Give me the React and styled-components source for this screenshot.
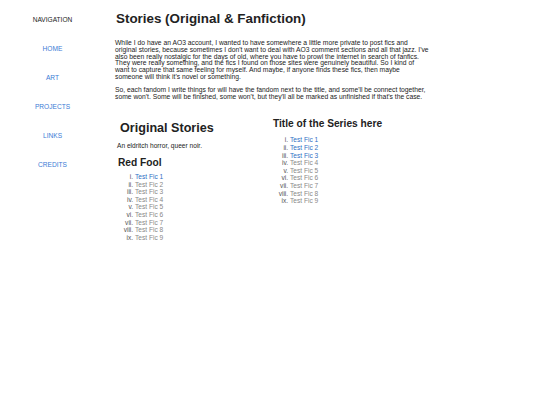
import React from "react";
import styled, { createGlobalStyle } from "styled-components";

const GlobalStyle = createGlobalStyle`
  html, body {
    margin: 0;
    padding: 0;
    background: #fff;
  }
  body {
    font-family: "Liberation Sans", Arial, sans-serif;
    font-size: 6.6px;
    color: #222;
  }
`;

const Page = styled.div`
  display: flex;
  align-items: flex-start;
  padding: 8px 0 0 0;
`;

const Nav = styled.nav`
  width: 105px;
  flex-shrink: 0;
  display: flex;
  flex-direction: column;
  align-items: center;
  padding-top: 8px;
  gap: 21.5px;
`;

const NavTitle = styled.div`
  font-size: 6.6px;
  color: #222;
  line-height: 7.6px;
`;

const NavLink = styled.a`
  font-size: 6.6px;
  line-height: 7.6px;
  color: #3a7bd5;
  text-decoration: none;
  cursor: pointer;
`;

const Main = styled.main`
  width: 315px;
  padding-left: 10px;
`;

const Title = styled.h1`
  font-size: 13.4px;
  font-weight: 700;
  margin: 3px 0 14px 1px;
  line-height: 15px;
`;

const Para = styled.p`
  font-size: 6.75px;
  line-height: 6.8px;
  color: #1a1a1a;
  margin: 0 0 6px 0;
`;

const Columns = styled.div`
  display: grid;
  grid-template-columns: 158px 1fr;
  margin-top: 18px;
`;

const Column = styled.section`
  display: flex;
  flex-direction: column;
`;

const SectionTitle = styled.h2`
  font-size: 12.6px;
  font-weight: 700;
  line-height: 14px;
  margin: ${({ $m }) => $m || "0"};
`;

const SeriesTitle = styled.h3`
  font-size: 10.2px;
  font-weight: 700;
  line-height: 12px;
  margin: ${({ $m }) => $m || "0"};
`;

const Blurb = styled.div`
  font-size: 6.6px;
  line-height: 7.6px;
  margin: 7px 0 7px 2px;
`;

const List = styled.ol`
  list-style: lower-roman;
  margin: 0;
  padding-left: ${({ $pad }) => $pad}px;
  font-size: 6.6px;
  line-height: 7.6px;
  li::marker {
    color: #555;
  }
`;

const Item = styled.li`
  color: ${({ $live }) => ($live ? "#2d6fc4" : "#888")};
`;

const stories = [1, 2, 3, 4, 5, 6, 7, 8, 9];

function FicList({ live, pad }) {
  return (
    <List $pad={pad}>
      {stories.map((n) => (
        <Item key={n} $live={n <= live}>
          Test Fic {n}
        </Item>
      ))}
    </List>
  );
}

export default function App() {
  return (
    <>
      <GlobalStyle />
      <Page>
        <Nav>
          <NavTitle>NAVIGATION</NavTitle>
          <NavLink>HOME</NavLink>
          <NavLink>ART</NavLink>
          <NavLink>PROJECTS</NavLink>
          <NavLink>LINKS</NavLink>
          <NavLink>CREDITS</NavLink>
        </Nav>
        <Main>
          <Title>Stories (Original &amp; Fanfiction)</Title>
          <Para>
            While I do have an AO3 account, I wanted to have somewhere a little
            more private to post fics and original stories, because sometimes I
            don't want to deal with AO3 comment sections and all that jazz. I've
            also been really nostalgic for the days of old, where you have to
            prowl the internet in search of fanfics. They were really something,
            and the fics I found on those sites were genuinely beautiful. So I
            kind of want to capture that same feeling for myself. And maybe, if
            anyone finds these fics, then maybe
            <br />
            someone will think it's novel or something.
          </Para>
          <Para>
            So, each fandom I write things for will have the fandom next to the
            title, and some'll be connect together, some won't. Some will be
            finished, some won't, but they'll all be marked as unfinished if
            that's the case.
          </Para>
          <Columns>
            <Column>
              <SectionTitle $m="3px 0 0 5px">Original Stories</SectionTitle>
              <Blurb>An eldritch horror, queer noir.</Blurb>
              <SeriesTitle $m="0 0 4px 3px">Red Fool</SeriesTitle>
              <FicList live={1} pad={20} />
            </Column>
            <Column>
              <SeriesTitle $m="0 0 6px 0">Title of the Series here</SeriesTitle>
              <FicList live={3} pad={17} />
            </Column>
          </Columns>
        </Main>
      </Page>
    </>
  );
}
